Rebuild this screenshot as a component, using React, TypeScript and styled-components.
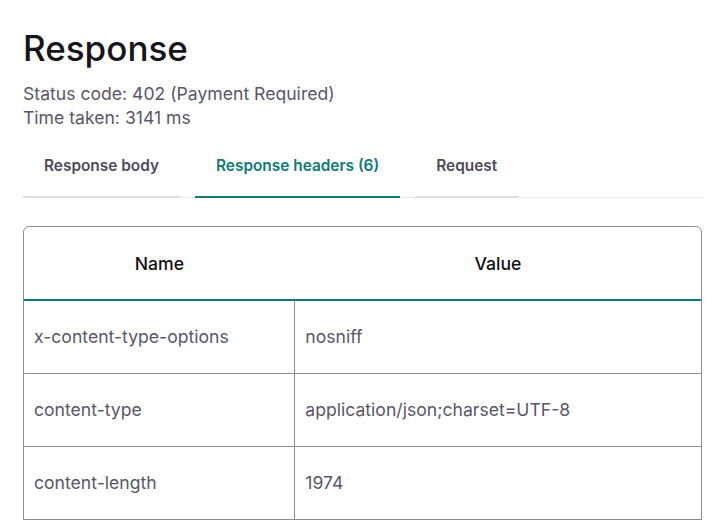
import React from "react";
import styled, { createGlobalStyle } from "styled-components";

const Global = createGlobalStyle`
  html, body { margin: 0; padding: 0; background: #ffffff; }
  body { font-family: Inter, "Noto Sans", sans-serif; -webkit-font-smoothing: antialiased; }
  * { box-sizing: border-box; }
`;

const Page = styled.main`
  padding: 22px 16px 0 23px;
`;

const Title = styled.h1`
  margin: 0;
  font-size: 35px;
  line-height: 52px;
  font-weight: 500;
  color: #16141c;
`;

const Meta = styled.div`
  margin-top: 8px;
  font-size: 17.6px;
  line-height: 24px;
  color: #5a5668;
`;

const TabList = styled.div`
  display: flex;
  gap: 15px;
  margin-top: 3px;
  border-bottom: 1px solid #e6e6ea;
`;

const Tab = styled.button<{ $active?: boolean }>`
  appearance: none;
  background: none;
  border: 0;
  border-bottom: 2px solid ${(p) => (p.$active ? "#0e7b75" : "#dcdce2")};
  margin-bottom: -1px;
  padding: 1px 21px 0;
  height: 65px;
  font-family: inherit;
  font-size: 15.4px;
  font-weight: 600;
  color: ${(p) => (p.$active ? "#0e7b75" : "#4f4a5c")};
  cursor: pointer;
`;

const TableWrap = styled.div`
  margin-top: 28px;
  border: 1px solid #8e8a9c;
  border-radius: 6px;
  overflow: hidden;
`;

const Table = styled.table`
  width: 100%;
  border-collapse: collapse;
  table-layout: fixed;
`;

const HeadCell = styled.th<{ $width?: string }>`
  width: ${(p) => p.$width ?? "auto"};
  height: 73px;
  font-size: 17.6px;
  font-weight: 500;
  color: #111016;
  text-align: center;
  border-bottom: 2px solid #0e7b75;
  padding: 0 11px;
`;

const Cell = styled.td`
  height: 73px;
  padding: 0 10px;
  font-size: 17.6px;
  color: #5a5668;
  border-bottom: 1px solid #8e8a9c;
  border-right: 1px solid #8e8a9c;
  &:last-child { border-right: 0; }
`;

const rows: [string, string][] = [
  ["x-content-type-options", "nosniff"],
  ["content-type", "application/json;charset=UTF-8"],
  ["content-length", "1974"],
  ["date", "Tue, 14 May 2024 10:12:31 GMT"],
  ["connection", "keep-alive"],
  ["cache-control", "no-cache"],
];

export default function App() {
  return (
    <>
      <Global />
      <Page>
        <Title>Response</Title>
        <Meta>
          <div>Status code: 402 (Payment Required)</div>
          <div>Time taken: 3141 ms</div>
        </Meta>
        <TabList>
          <Tab>Response body</Tab>
          <Tab $active>Response headers (6)</Tab>
          <Tab>Request</Tab>
        </TabList>
        <TableWrap>
          <Table>
            <thead>
              <tr>
                <HeadCell $width="40%">Name</HeadCell>
                <HeadCell>Value</HeadCell>
              </tr>
            </thead>
            <tbody>
              {rows.map(([k, v]) => (
                <tr key={k}>
                  <Cell>{k}</Cell>
                  <Cell>{v}</Cell>
                </tr>
              ))}
            </tbody>
          </Table>
        </TableWrap>
      </Page>
    </>
  );
}
